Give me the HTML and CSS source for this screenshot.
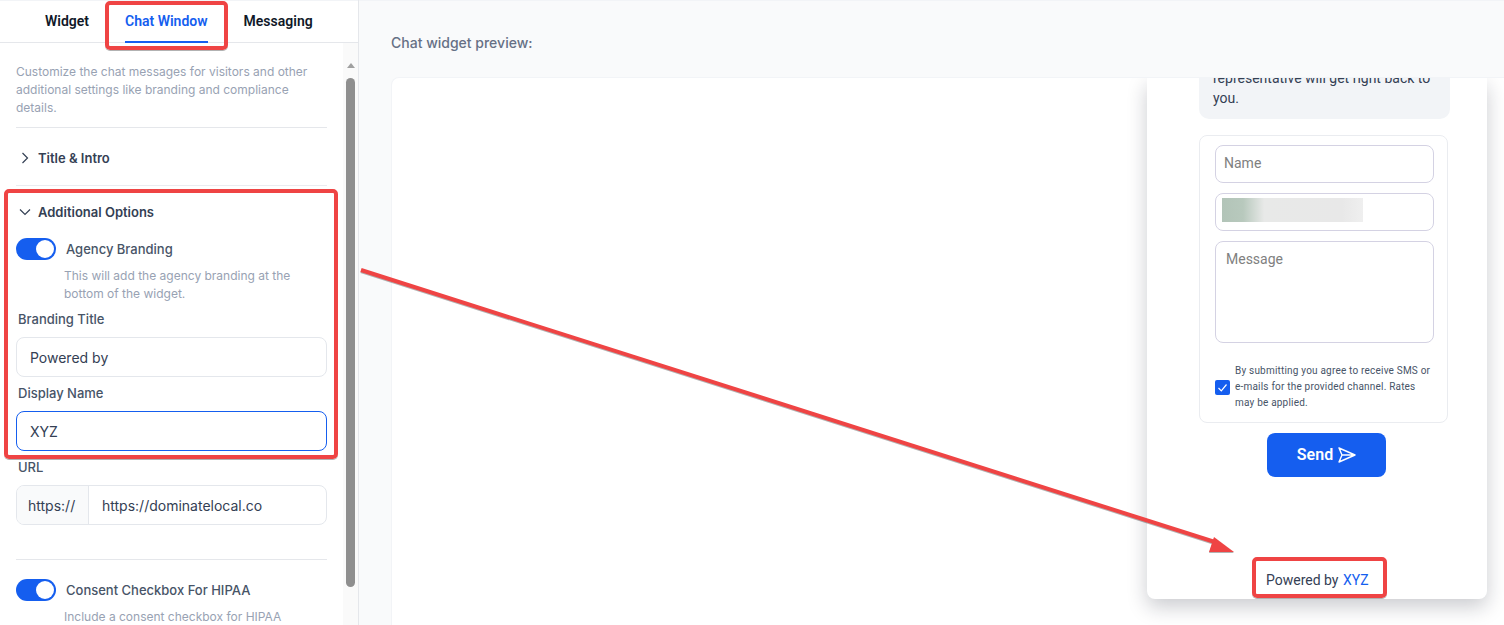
FILE: index.html
```html
<!DOCTYPE html>
<html lang="en">
<head>
  <meta charset="UTF-8" />
  <title>Chat Window settings</title>
  <link rel="stylesheet" href="styles.css">
</head>
<body>
  <div class="page">
    <aside class="sidebar">
      <div class="tabs">
        <div class="tab">Widget</div>
        <div class="tab tab-active">Chat Window</div>
        <div class="tab">Messaging</div>
      </div>
      <div class="sidebar-body">
        <div class="settings">
          <p class="intro">Customize the chat messages for visitors and other additional settings like branding and compliance details.</p>

          <div class="section section-closed">
            <svg class="chevron" viewBox="0 0 12 12"><path d="M3.5 1 L8.5 6 L3.5 11"/></svg>
            <span>Title &amp; Intro</span>
          </div>

          <div class="section-open">
            <div class="section">
              <svg class="chevron" viewBox="0 0 12 12"><path d="M1 3.5 L6 8.5 L11 3.5"/></svg>
              <span>Additional Options</span>
            </div>
            <div class="toggle-row">
              <div class="toggle"></div>
              <div class="toggle-label">Agency Branding</div>
            </div>
            <p class="hint">This will add the agency branding at the bottom of the widget.</p>
            <label class="field-label">Branding Title</label>
            <div class="input">Powered by</div>
            <label class="field-label">Display Name</label>
            <div class="input input-focus">XYZ</div>
            <label class="field-label">URL</label>
            <div class="input input-group">
              <div class="prefix">https://</div>
              <div class="group-value">https://dominatelocal.co</div>
            </div>
          </div>

          <div class="divider"></div>

          <div class="toggle-row">
            <div class="toggle"></div>
            <div class="toggle-label">Consent Checkbox For HIPAA</div>
          </div>
          <p class="hint">Include a consent checkbox for HIPAA compliance.</p>
        </div>
        <div class="scrollbar">
          <div class="scroll-arrow"></div>
          <div class="scroll-thumb"></div>
        </div>
      </div>
    </aside>

    <main class="preview">
      <div class="preview-title">Chat widget preview:</div>
      <div class="preview-box">
        <div class="widget">
          <div class="bubble">representative will get right back to you.</div>
          <div class="form-card">
            <div class="w-input">Name</div>
            <div class="w-input"><div class="blurred"></div></div>
            <div class="w-input w-textarea">Message</div>
            <div class="consent">
              <div class="checkbox">
                <svg viewBox="0 0 15 15"><path d="M3.5 8 L6.3 10.8 L11.5 4.5"/></svg>
              </div>
              <div class="consent-text">By submitting you agree to receive SMS or e-mails for the provided channel. Rates may be applied.</div>
            </div>
          </div>
          <div class="send">
            Send
            <svg viewBox="0 0 18 16"><path d="M1 1 L17 8 L1 15 L4 8 Z M4 8 H17"/></svg>
          </div>
          <div class="powered">Powered by <span class="powered-name">XYZ</span></div>
        </div>
      </div>
    </main>
  </div>

  <!-- red callouts drawn on top of the screenshot -->
  <div class="callout callout-tab"></div>
  <div class="callout callout-options"></div>
  <div class="callout callout-powered"></div>
  <svg class="arrow" viewBox="0 0 1504 625">
    <line x1="361" y1="270" x2="1218" y2="543"/>
    <polygon points="1234,552 1214,537 1209,552"/>
  </svg>
</body>
</html>
```

FILE: styles.css
```css
* {
  box-sizing: border-box;
}
html, body {
  margin: 0;
  padding: 0;
  height: 625px;
  overflow: hidden;
  font-family: Inter, "Noto Sans", sans-serif;
  color: #344054;
  background: #fff;
}
.page {
  display: flex;
  height: 625px;
}

/* left column */
.sidebar {
  width: 359px;
  flex-shrink: 0;
  border-right: 1px solid #e5e7eb;
  display: flex;
  flex-direction: column;
}
.tabs {
  display: flex;
  height: 43px;
  flex-shrink: 0;
  padding-left: 45px;
  gap: 36px;
  border-bottom: 1px solid #e5e7eb;
  border-top: 1px solid #f2f4f7;
}
.tab {
  font-family: Roboto, sans-serif;
  font-size: 14px;
  font-weight: 600;
  color: #101828;
  line-height: 41px;
  height: 42px;
}
.tab-active {
  color: #155eef;
  border-bottom: 2px solid #155eef;
}
.sidebar-body {
  flex: 1;
  display: flex;
  min-height: 0;
}
.settings {
  width: 343px;
  padding: 20px 16px 0;
  overflow: hidden;
}
.intro {
  margin: 0;
  padding-bottom: 10px;
  font-size: 12px;
  line-height: 18px;
  color: #98a2b3;
  border-bottom: 1px solid #e5e7eb;
}
.section {
  display: flex;
  align-items: center;
  gap: 12px;
  font-size: 13px;
  font-weight: 600;
  color: #344054;
  line-height: 20px;
}
.section-closed {
  padding: 21px 0 19px 3px;
  height: 58px;
  border-bottom: 1px solid #eaecf0;
}
.section-open > .section {
  padding: 8px 0 0 3px;
  height: 44px;
}
.chevron {
  width: 12px;
  height: 12px;
  margin-right: -5px;
  fill: none;
  stroke: #344054;
  stroke-width: 1.2;
}
.toggle-row {
  display: flex;
  align-items: center;
  gap: 10px;
  height: 22px;
}
.section-open .toggle-row {
  margin-top: 8px;
}
.toggle {
  position: relative;
  width: 40px;
  height: 22px;
  border-radius: 11px;
  background: #155eef;
}
.toggle::after {
  content: "";
  position: absolute;
  top: 2px;
  right: 2px;
  width: 18px;
  height: 18px;
  border-radius: 50%;
  background: #fff;
}
.toggle-label {
  font-size: 13px;
  font-weight: 500;
  color: #475467;
}
.hint {
  margin: 7px 0 0 48px;
  font-size: 12px;
  line-height: 18px;
  color: #98a2b3;
}
.field-label {
  display: block;
  margin: 8px 0 9px 2px;
  font-size: 13px;
  font-weight: 500;
  line-height: 17px;
  color: #475467;
}
.input {
  height: 40px;
  padding: 0 13px;
  line-height: 40px;
  font-size: 14px;
  color: #344054;
  border: 1px solid #e4e7ec;
  border-radius: 8px;
  background: #fff;
}
.input + .field-label {
  margin-top: 8px;
}
.input-focus {
  border-color: #155eef;
}
.input-group {
  display: flex;
  padding: 0;
  overflow: hidden;
}
.prefix {
  width: 72px;
  padding-left: 11px;
  background: #f9fafb;
  border-right: 1px solid #e4e7ec;
}
.group-value {
  padding-left: 13px;
}
.divider {
  height: 1px;
  margin: 34px 0 19px;
  background: #e5e7eb;
}
.scrollbar {
  width: 15px;
  background: #fafafa;
  padding-top: 20px;
}
.scroll-arrow {
  width: 0;
  height: 0;
  margin: 0 auto;
  border-left: 4px solid transparent;
  border-right: 4px solid transparent;
  border-bottom: 5px solid #a0a0a0;
}
.scroll-thumb {
  width: 9px;
  height: 509px;
  margin: 10px auto 0;
  border-radius: 5px;
  background: #8f8f8f;
}

/* right column */
.preview {
  flex: 1;
  min-width: 0;
  background: #f9fafb;
  padding: 35px 0 0 32px;
  border-top: 1px solid #f2f4f7;
}
.preview-title {
  font-size: 14px;
  font-weight: 500;
  line-height: 14px;
  color: #667085;
  margin-bottom: 27px;
}
.preview-box {
  height: 560px;
  background: #fff;
  border: 1px solid #f2f4f7;
  border-right: 0;
  border-radius: 8px 0 0 0;
  padding-left: 755px;
  overflow: hidden;
}
.widget {
  position: relative;
  width: 340px;
  height: 521px;
  background: #fff;
  border-radius: 0 0 8px 8px;
  box-shadow: 0 8px 20px rgba(16, 24, 40, 0.22);
  padding-left: 52px;
  overflow: hidden;
  font-family: Roboto, sans-serif;
}
.bubble {
  width: 251px;
  margin-top: -20px;
  height: 61px;
  padding: 10px 14px 0;
  font-size: 14px;
  line-height: 20px;
  color: #344054;
  background: #f2f4f7;
  border-radius: 0 0 10px 10px;
}
.form-card {
  width: 249px;
  height: 288px;
  margin-top: 16px;
  padding: 9px 13px 0 15px;
  border: 1px solid #eaecf0;
  border-radius: 8px;
}
.w-input {
  height: 38px;
  margin-bottom: 10px;
  padding: 0 8px;
  font-size: 14px;
  line-height: 35px;
  color: #808080;
  border: 1px solid #d4d2e3;
  border-radius: 8px;
}
.w-textarea {
  height: 102px;
  padding-left: 10px;
  margin-bottom: 0;
}
.blurred {
  width: 141px;
  height: 24px;
  margin: 4px 0 0 -2px;
  background: linear-gradient(90deg, #b2c4b8 0%, #b8c9bd 15%, #e8e9e8 30%, #e8e8e8 85%, #efefef 100%);
}
.consent {
  display: flex;
  align-items: center;
  gap: 5px;
  margin-top: 20px;
}
.checkbox {
  width: 15px;
  height: 15px;
  flex-shrink: 0;
  border-radius: 2px;
  background: #155eef;
}
.checkbox svg {
  display: block;
  fill: none;
  stroke: #fff;
  stroke-width: 1.2;
}
.consent-text {
  font-size: 10px;
  line-height: 16px;
  letter-spacing: 0.2px;
  color: #475467;
}
.send {
  display: flex;
  align-items: center;
  justify-content: center;
  gap: 5px;
  width: 119px;
  height: 44px;
  margin: 10px 0 0 68px;
  font-size: 16px;
  font-weight: 600;
  line-height: 42px;
  padding-bottom: 1px;
  color: #fff;
  background: #155eef;
  border-radius: 8px;
}
.send svg {
  width: 18px;
  height: 16px;
  fill: none;
  stroke: #fff;
  stroke-width: 1.4;
  stroke-linejoin: round;
}
.powered {
  position: absolute;
  left: 119px;
  bottom: 11px;
  font-size: 14px;
  color: #344054;
}
.powered-name {
  margin-left: 1px;
  color: #155eef;
}

/* annotations */
.callout {
  position: absolute;
  border: 4px solid #ef4444;
  border-radius: 5px;
  box-shadow: 0 1px 0 rgba(0, 0, 0, 0.3);
}
.callout-tab {
  left: 105px;
  top: 1px;
  width: 123px;
  height: 49px;
}
.callout-options {
  left: 4px;
  top: 189px;
  width: 334px;
  height: 270px;
}
.callout-powered {
  left: 1252px;
  top: 557px;
  width: 135px;
  height: 41px;
}
.arrow {
  position: absolute;
  left: 0;
  top: 0;
  width: 1504px;
  height: 625px;
  pointer-events: none;
  filter: drop-shadow(0 1px 0 rgba(0, 0, 0, 0.3));
}
.arrow line {
  stroke: #ef4444;
  stroke-width: 4;
}
.arrow polygon {
  fill: #ef4444;
}
```
